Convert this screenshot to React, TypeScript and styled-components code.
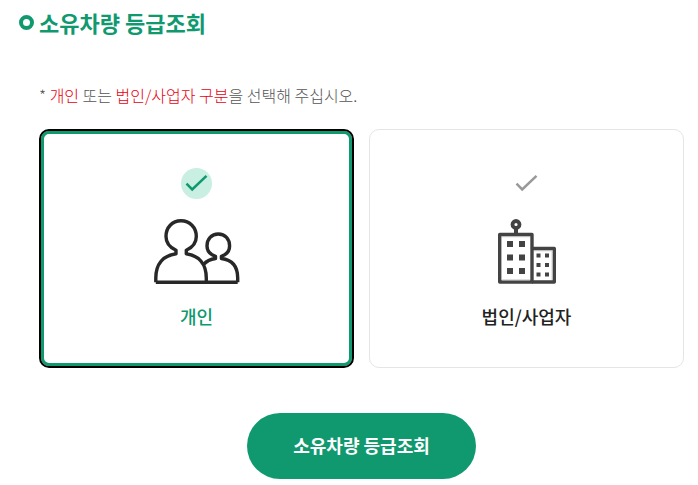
import React, { useState } from "react";
import styled, { createGlobalStyle } from "styled-components";

const green = "#10996f";

const GlobalStyle = createGlobalStyle`
  *, *::before, *::after { box-sizing: border-box; }
  body {
    margin: 0;
    background: #fff;
    color: #222;
    font-family: "Noto Sans CJK KR", "Noto Sans", sans-serif;
  }
`;

const Page = styled.main`
  padding: 7px 14px 6px 19px;
`;

const Title = styled.h1`
  display: flex;
  align-items: center;
  gap: 5px;
  margin: 0;
  color: ${green};
  font-size: 22px;
  font-weight: 700;
  line-height: 30px;

  &::before {
    content: "";
    width: 15px;
    height: 15px;
    border: 4px solid ${green};
    border-radius: 50%;
  }
`;

const Form = styled.form`
  padding: 46px 0 0 20px;
`;

const Choices = styled.fieldset`
  min-width: 0;
  margin: 0;
  padding: 0;
  border: 0;
`;

const Guide = styled.legend`
  padding: 0;
  margin-bottom: 22px;
  color: #555;
  font-size: 16px;
  font-weight: 300;
  line-height: 24px;
`;

const Accent = styled.span`
  color: #e60012;
`;

const Cards = styled.div`
  display: grid;
  grid-template-columns: 1fr 1fr;
  gap: 15px;
`;

const Card = styled.label<{ $selected: boolean }>`
  display: flex;
  flex-direction: column;
  align-items: center;
  padding: ${(p) => (p.$selected ? "37px 0 36px" : "38px 0 37px")};
  border: ${(p) => (p.$selected ? "2px solid #000" : "1px solid #e5e5e5")};
  border-radius: 10px;
  box-shadow: ${(p) => (p.$selected ? `inset 0 0 0 3px ${green}` : "none")};
  cursor: pointer;
`;

const Radio = styled.input`
  appearance: none;
  position: absolute;
  width: 1px;
  height: 1px;
  margin: 0;
  opacity: 0;
`;

const Check = styled.span<{ $selected: boolean }>`
  display: flex;
  width: 31px;
  height: 31px;
  border-radius: 50%;
  background: ${(p) => (p.$selected ? "#c8efe2" : "transparent")};
  color: ${(p) => (p.$selected ? green : "#999")};
`;

const Picture = styled.span`
  display: flex;
  height: 66px;
  margin-top: 20px;
`;

const CardName = styled.span<{ $selected: boolean }>`
  margin-top: 18px;
  color: ${(p) => (p.$selected ? green : "#222")};
  font-size: 18px;
  font-weight: 500;
  line-height: 27px;
`;

const Actions = styled.div`
  display: flex;
  justify-content: center;
  margin-top: 45px;
`;

const Submit = styled.button`
  padding: 17px 46px 19px;
  border: 0;
  border-radius: 33px;
  background: ${green};
  color: #fff;
  font-family: inherit;
  font-size: 18px;
  font-weight: 700;
  line-height: 30px;
  cursor: pointer;
`;

const CheckMark = () => (
  <svg width="31" height="31" viewBox="0 0 31 31" fill="none" aria-hidden="true">
    <path d="M5.500 15.700 L11.200 21.500 L25.500 7.800" stroke="currentColor" strokeWidth="2.500" />
  </svg>
);

const PeopleIcon = () => (
  <svg width="86" height="66" viewBox="0 0 86 66" fill="none" stroke="#282828" strokeWidth="3.400" strokeLinejoin="round" aria-hidden="true">
    <path d="M1.800 63.200V59C1.800 45 9 36.500 22 34.700V31.200C16 28.500 12 23.500 12 17.500C12 8.500 18.200 1.800 27 1.800S42.300 8.500 42.300 17.500C42.300 23.500 38.300 28.500 32.300 31.200V34.700C45 36.500 52.300 45 52.300 59V63.200" />
    <path d="M49.600 45.500C52.500 42 56 40.200 61.500 39.500V37.300C56.500 35.600 53 31.700 53 27C53 20 57.500 15 64.300 15S75.600 20 75.600 27C75.600 31.700 72.500 35.600 67.400 37.300V39.500C78 40.800 83.700 47.500 83.700 59V63.200" />
    <path d="M1.800 63.200H83.700" />
  </svg>
);

const BuildingIcon = () => (
  <svg width="60" height="66" viewBox="0 0 60 66" fill="none" aria-hidden="true">
    <g stroke="#434343" strokeWidth="3.400" strokeLinejoin="round">
      <circle cx="19" cy="5.500" r="3.500" strokeWidth="3.800" />
      <path d="M19 9V15" strokeWidth="4" />
      <path d="M2.700 15.500H35V63H2.700Z" />
      <path d="M35 29.500H57.300V63H35" />
    </g>
    <path d="M5 17.700H33M37 31.700H55.200V61M5 61H33" stroke="#bbb" strokeWidth="1" />
    <path fill="#434343" d="M10 22h6v6h-6zM22 22h6v6h-6zM10 35.500h6v6h-6zM22 35.500h6v6h-6zM10 49h6v6h-6zM22 49h6v6h-6zM39.500 34.500h4v4h-4zM48 34.500h4v4h-4zM39.500 44h4v4h-4zM48 44h4v4h-4zM39.500 53.500h4v4h-4zM48 53.500h4v4h-4z" />
  </svg>
);

const options = [
  { id: "person", name: "개인", icon: <PeopleIcon /> },
  { id: "company", name: "법인/사업자", icon: <BuildingIcon /> },
];

export default function App() {
  const [selected, setSelected] = useState("person");

  return (
    <Page>
      <GlobalStyle />
      <Title>소유차량 등급조회</Title>
      <Form onSubmit={(e: React.FormEvent) => e.preventDefault()}>
        <Choices>
          <Guide>
            * <Accent>개인</Accent> 또는 <Accent>법인/사업자 구분</Accent>을 선택해 주십시오.
          </Guide>
          <Cards>
            {options.map(({ id, name, icon }) => {
              const on = selected === id;
              return (
                <Card key={id} htmlFor={id} $selected={on}>
                  <Radio type="radio" id={id} name="owner" checked={on} onChange={() => setSelected(id)} />
                  <Check $selected={on}>
                    <CheckMark />
                  </Check>
                  <Picture>{icon}</Picture>
                  <CardName $selected={on}>{name}</CardName>
                </Card>
              );
            })}
          </Cards>
        </Choices>
        <Actions>
          <Submit type="submit">소유차량 등급조회</Submit>
        </Actions>
      </Form>
    </Page>
  );
}
